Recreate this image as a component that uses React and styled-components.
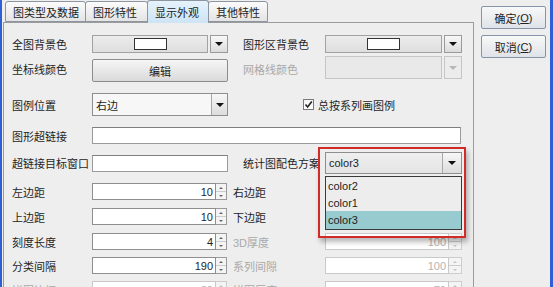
import React from 'react';
import styled, { createGlobalStyle } from 'styled-components';

const GlobalStyle = createGlobalStyle`
  html, body {
    margin: 0;
    padding: 0;
  }
  body {
    width: 553px;
    height: 287px;
    overflow: hidden;
    background: #eeeeee;
    font-family: "Liberation Sans", "Noto Sans CJK SC", sans-serif;
    font-size: 11px;
    color: #1e1e1e;
  }
`;

const Frame = styled.div`
  display: flex;
  width: 553px;
  height: 287px;
  box-sizing: border-box;
  border-left: 2px solid #2f5fd6;
  border-right: 3px solid #2f5fd6;
  background: #eeeeee;
  overflow: hidden;
`;

const Main = styled.div`
  margin-left: 1px;
  width: 471px;
  display: flex;
  flex-direction: column;
`;

const TabStrip = styled.div`
  display: flex;
  align-items: flex-end;
  height: 22px;
  padding-left: 2px;
  position: relative;
  z-index: 1;
`;

const Tab = styled.div`
  box-sizing: border-box;
  width: ${(p) => p.$w}px;
  height: ${(p) => (p.$active ? 23 : 21)}px;
  margin-right: -1px;
  margin-bottom: ${(p) => (p.$active ? -1 : 0)}px;
  padding-left: 7px;
  display: flex;
  align-items: center;
  border: 1px solid #8d96a0;
  border-bottom: ${(p) => (p.$active ? 'none' : '1px solid #8d96a0')};
  border-radius: 3px 3px 0 0;
  background: ${(p) =>
    p.$active
      ? 'linear-gradient(#e6f2fb, #cde4f5)'
      : 'linear-gradient(#fbfbfb, #e4e4e4)'};
  color: #222;
  white-space: nowrap;
`;

const Panel = styled.div`
  flex: 1;
  border: 1px solid #9c9c9c;
  border-bottom: none;
  background: #eeeeee;
  padding: 12px 0 0 8px;
  box-sizing: border-box;
`;

const Row = styled.div`
  display: grid;
  grid-template-columns: 80px 136px 97px 137px;
  align-items: center;
  height: ${(p) => p.$h}px;
  margin-top: ${(p) => p.$mt || 0}px;
`;

const Label = styled.span`
  padding-left: ${(p) => p.$indent || 0}px;
  color: ${(p) => (p.$dim ? '#a9a9a9' : '#1e1e1e')};
  white-space: nowrap;
`;

const Arrow = styled.span`
  width: 0;
  height: 0;
  border-left: 4px solid transparent;
  border-right: 4px solid transparent;
  border-top: 4px solid ${(p) => (p.$dim ? '#b8b8b8' : '#111')};
`;

const SplitCombo = styled.div`
  display: flex;
  gap: 2px;
  height: ${(p) => p.$h}px;
  align-self: ${(p) => p.$align || 'center'};
`;

const SplitMain = styled.div`
  flex: 1;
  display: flex;
  align-items: center;
  justify-content: center;
  border: 1px solid ${(p) => (p.$dim ? '#c6c6c6' : '#a2a2a2')};
  background: ${(p) =>
    p.$dim ? '#e9e9e9' : 'linear-gradient(#ececec, #dedede)'};
`;

const SplitArrow = styled.div`
  width: 16px;
  display: flex;
  align-items: center;
  justify-content: center;
  border: 1px solid ${(p) => (p.$dim ? '#c6c6c6' : '#9a9a9a')};
  background: ${(p) =>
    p.$dim ? '#ececec' : 'linear-gradient(#f8f8f8, #dcdcdc)'};
`;

const Swatch = styled.span`
  width: 31px;
  height: 10px;
  background: #ffffff;
  border: 1px solid #333;
`;

const Combo = styled.div`
  display: flex;
  height: ${(p) => p.$h}px;
  border: 1px solid #8e8e8e;
  background: ${(p) => p.$bg || '#f7f7f7'};
  box-sizing: border-box;
`;

const ComboText = styled.div`
  flex: 1;
  display: flex;
  align-items: center;
  padding-left: 3px;
`;

const ComboButton = styled.div`
  width: ${(p) => p.$w || 15}px;
  display: flex;
  align-items: center;
  justify-content: center;
  border-left: 1px solid #a8a8a8;
  background: linear-gradient(#f7f7f7, #dcdcdc);
`;

const EditButton = styled.div`
  height: 23px;
  align-self: end;
  box-sizing: border-box;
  display: flex;
  align-items: center;
  justify-content: center;
  border: 1px solid #8c8c8c;
  border-radius: 2px;
  background: linear-gradient(#f6f6f6, #dadada);
`;

const CheckWrap = styled.label`
  grid-column: 3 / 5;
  padding-left: 75px;
  display: flex;
  align-items: center;
  gap: 4px;
`;

const CheckBox = styled.span`
  width: 11px;
  height: 11px;
  box-sizing: border-box;
  border: 1px solid #7a7a7a;
  background: linear-gradient(#f4f4f4, #ffffff);
  display: flex;
  align-items: center;
  justify-content: center;
`;

const TextField = styled.div`
  grid-column: ${(p) => p.$span || 'auto'};
  height: 17px;
  box-sizing: border-box;
  border: 1px solid #9a9a9a;
  border-top-color: #7f7f7f;
  background: #ffffff;
  margin-right: ${(p) => p.$mr || 0}px;
`;

const PopupAnchor = styled.div`
  position: relative;
  align-self: start;
`;

const ListPopup = styled.div`
  position: absolute;
  top: 24px;
  left: 0;
  right: 0;
  border: 1px solid #3a3a3a;
  background: #eeeeee;
  z-index: 3;
`;

const ListItem = styled.div`
  height: ${(p) => p.$h}px;
  display: flex;
  align-items: center;
  padding-left: 2px;
  background: ${(p) => (p.$selected ? '#97cbcf' : '#ededed')};
`;

const Highlight = styled.div`
  position: absolute;
  top: -5px;
  left: -7px;
  right: -4px;
  height: 91px;
  border: 2px solid #d22b27;
  box-sizing: border-box;
  box-shadow: 2px 4px 5px rgba(0, 0, 0, 0.28);
  pointer-events: none;
  z-index: 4;
`;

const Spinner = styled.div`
  display: flex;
  height: 17px;
  margin-right: ${(p) => p.$mr || 0}px;
  color: ${(p) => (p.$dim ? '#b3b3b3' : '#1e1e1e')};
`;

const SpinField = styled.div`
  flex: 1;
  box-sizing: border-box;
  border: 1px solid ${(p) => (p.$dim ? '#c9c9c9' : '#8e8e8e')};
  background: #ffffff;
  display: flex;
  align-items: center;
  justify-content: flex-end;
  padding-right: 2px;
`;

const SpinButtons = styled.div`
  width: ${(p) => p.$w}px;
  display: flex;
  flex-direction: column;
  box-sizing: border-box;
  border: 1px solid ${(p) => (p.$dim ? '#cdcdcd' : '#9a9a9a')};
  border-left: none;
  background: #f4f4f4;
`;

const SpinHalf = styled.div`
  flex: 1;
  display: flex;
  align-items: center;
  justify-content: center;
  & + & {
    border-top: 1px solid ${(p) => (p.$dim ? '#cdcdcd' : '#9a9a9a')};
  }
`;

const Tick = styled.span`
  width: 0;
  height: 0;
  border-left: 2px solid transparent;
  border-right: 2px solid transparent;
  ${(p) => (p.$up ? 'border-bottom' : 'border-top')}: 2px solid
    ${(p) => (p.$dim ? '#c4c4c4' : '#666')};
`;

const Side = styled.div`
  width: 76px;
  box-sizing: border-box;
  padding: 6px 0 0 7px;
  display: flex;
  flex-direction: column;
  gap: 6px;
`;

const DialogButton = styled.div`
  width: 65px;
  height: 23px;
  box-sizing: border-box;
  display: flex;
  align-items: center;
  justify-content: center;
  border: 1px solid #8594a8;
  border-radius: 2px;
  background: linear-gradient(#f8f8f8, #dfe3e8);
  color: #222;
  u {
    text-decoration: underline;
  }
`;

const tabs = [
  { name: '图类型及数据', w: 81 },
  { name: '图形特性', w: 63 },
  { name: '显示外观', w: 62, active: true },
  { name: '其他特性', w: 60 },
];

const spinRows = [
  { mt: 9, left: '左边距', lv: '10', right: '右边距', rv: '10' },
  { mt: 8, left: '上边距', lv: '10', right: '下边距', rv: '10' },
  { mt: 8, left: '刻度长度', lv: '4', right: '3D厚度', rv: '100', rdim: true },
  { mt: 7, left: '分类间隔', lv: '190', right: '系列间隙', rv: '100', rdim: true },
  { mt: 7, left: '饼图边框', lv: '80', ldim: true, right: '饼图厚度', rv: '70', rdim: true },
];

const SpinBox = ({ value, dim, btnW, mr }) => (
  <Spinner $dim={dim} $mr={mr}>
    <SpinField $dim={dim}>{value}</SpinField>
    <SpinButtons $w={btnW} $dim={dim}>
      <SpinHalf $dim={dim}>
        <Tick $up $dim={dim} />
      </SpinHalf>
      <SpinHalf $dim={dim}>
        <Tick $dim={dim} />
      </SpinHalf>
    </SpinButtons>
  </Spinner>
);

const ColorCombo = ({ dim, h, align }) => (
  <SplitCombo $h={h} $align={align}>
    <SplitMain $dim={dim}>{!dim && <Swatch />}</SplitMain>
    <SplitArrow $dim={dim}>
      <Arrow $dim={dim} />
    </SplitArrow>
  </SplitCombo>
);

export default function App() {
  return (
    <>
      <GlobalStyle />
      <Frame>
        <Main>
          <TabStrip>
            {tabs.map((t) => (
              <Tab key={t.name} $w={t.w} $active={t.active}>
                {t.name}
              </Tab>
            ))}
          </TabStrip>
          <Panel>
            <Row $h={18}>
              <Label>全图背景色</Label>
              <ColorCombo h={18} />
              <Label $indent={15}>图形区背景色</Label>
              <ColorCombo h={18} />
            </Row>
            <Row $h={26} $mt={3}>
              <Label>坐标线颜色</Label>
              <EditButton>编辑</EditButton>
              <Label $indent={15} $dim>
                网格线颜色
              </Label>
              <ColorCombo dim h={23} align="start" />
            </Row>
            <Row $h={23} $mt={11}>
              <Label>图例位置</Label>
              <Combo $h={23}>
                <ComboText>右边</ComboText>
                <ComboButton>
                  <Arrow />
                </ComboButton>
              </Combo>
              <CheckWrap>
                <CheckBox>
                  <svg width="9" height="9" viewBox="0 0 9 9">
                    <path d="M1.5 4.5 L3.6 7 L7.8 1.6" fill="none" stroke="#222" strokeWidth="1.6" />
                  </svg>
                </CheckBox>
                总按系列画图例
              </CheckWrap>
            </Row>
            <Row $h={17} $mt={11}>
              <Label>图形超链接</Label>
              <TextField $span="2 / 5" $mr={1} />
            </Row>
            <Row $h={22} $mt={8}>
              <Label>超链接目标窗口</Label>
              <TextField />
              <Label $indent={15}>统计图配色方案</Label>
              <PopupAnchor>
                <Combo $h={22} $bg="linear-gradient(#efefef, #e4e4e4)">
                  <ComboText>color3</ComboText>
                  <ComboButton $w={18}>
                    <Arrow />
                  </ComboButton>
                </Combo>
                <ListPopup>
                  <ListItem $h={17}>color2</ListItem>
                  <ListItem $h={17}>color1</ListItem>
                  <ListItem $h={18} $selected>
                    color3
                  </ListItem>
                </ListPopup>
                <Highlight />
              </PopupAnchor>
            </Row>
            {spinRows.map((r) => (
              <Row key={r.left} $h={17} $mt={r.mt}>
                <Label $dim={r.ldim}>{r.left}</Label>
                <SpinBox value={r.lv} dim={r.ldim} btnW={11} mr={1} />
                <Label $indent={5} $dim={r.rdim}>
                  {r.right}
                </Label>
                <SpinBox value={r.rv} dim={r.rdim} btnW={13} />
              </Row>
            ))}
          </Panel>
        </Main>
        <Side>
          <DialogButton>
            确定(<u>O</u>)
          </DialogButton>
          <DialogButton>
            取消(<u>C</u>)
          </DialogButton>
        </Side>
      </Frame>
    </>
  );
}
